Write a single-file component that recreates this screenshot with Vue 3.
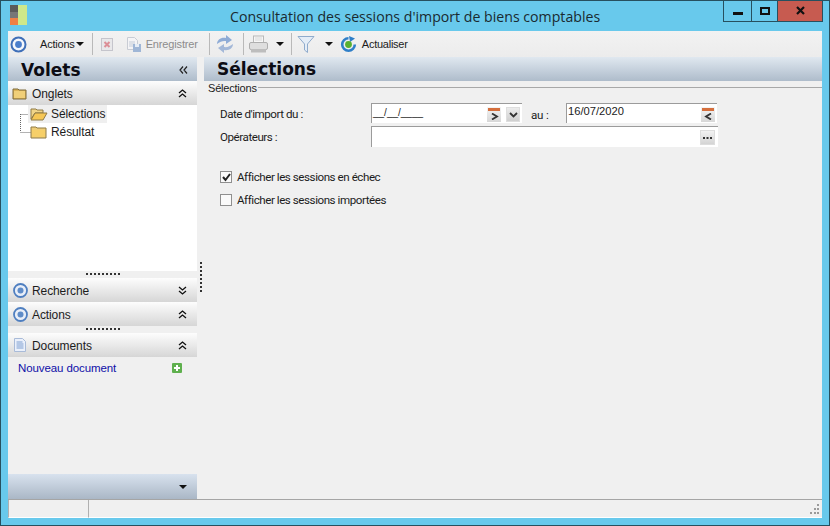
<script setup>
const folderBody = 'M1 3h5l1 1h7v9H1z'
</script>

<template>
  <div class="window">
    <header class="titlebar">
      <svg class="applogo" width="17" height="20" viewBox="0 0 17 20">
        <rect x="0" y="0" width="8" height="7" fill="#5b5b5b" />
        <rect x="0" y="7" width="8" height="6" fill="#777" />
        <rect x="0" y="13" width="8" height="7" fill="#ee8044" />
        <rect x="8" y="0" width="9" height="20" fill="#cfe88a" />
      </svg>
      <div class="title">Consultation des sessions d'import de biens comptables</div>
      <div class="winbtns">
        <div class="wb wb-min"><span></span></div>
        <div class="wb wb-max"><span></span></div>
        <div class="wb wb-close">
          <svg width="9" height="9" viewBox="0 0 9 9"><path d="M1 1l7 7M8 1L1 8" stroke="#111" stroke-width="2.2" fill="none" /></svg>
        </div>
      </div>
    </header>

    <div class="client">
      <div class="toolbar">
        <svg class="ti t-target" width="17" height="17" viewBox="0 0 17 17"><circle cx="8.500" cy="8.500" r="7" fill="#f4f7fc" stroke="#3f6fb8" stroke-width="2" /><circle cx="8.500" cy="8.500" r="3.400" fill="#4a7ecb" /></svg>
        <span class="tb-text t-actions">Actions</span><span class="caret c1"></span>
        <i class="sep s1"></i>
        <svg class="ti t-del" width="14" height="15" viewBox="0 0 14 15"><rect x="1.500" y="1.500" width="11" height="12" fill="#e8e8ea" stroke="#c5c5cc" /><path d="M4.500 5l5 5M9.500 5l-5 5" stroke="#dc8f97" stroke-width="2" /></svg>
        <svg class="ti t-save" width="18" height="17" viewBox="0 0 18 17"><path d="M2.500 1.500h7l3 3v9h-10z" fill="#f4f4f6" stroke="#c8ccd4" /><path d="M4 6h6M4 8h6M4 10h4" stroke="#c4ccd8" /><rect x="8" y="8" width="8" height="8" fill="#9fb6d6" /><rect x="10" y="8" width="4" height="3" fill="#e6edf6" /></svg>
        <span class="tb-text disabled">Enregistrer</span>
        <i class="sep s2"></i>
        <svg class="ti t-refresh" width="18" height="18" viewBox="0 0 18 18"><path d="M1 9c0-4 4-7 9-6V0l6 5-6 4V6C7 5.500 4 6.500 1 9z" fill="#8facd6" /><path d="M17 9c0 4-4 7-9 6v3l-6-5 6-4v3c3 .5 6-.5 9-3z" fill="#a3b8d8" /></svg>
        <i class="sep s3"></i>
        <svg class="ti t-print" width="19" height="18" viewBox="0 0 19 18"><rect x="4.500" y="1" width="10" height="7" fill="#f6f6f6" stroke="#b8b8b8" /><path d="M6 3h7M6 5h7" stroke="#d8d8d8" /><rect x=".5" y="7.500" width="18" height="7" rx="1.500" fill="#dedede" stroke="#aeaeae" /><rect x="2" y="14" width="15" height="3.500" fill="#bdbdbd" /></svg>
        <span class="caret c2"></span>
        <i class="sep s4"></i>
        <svg class="ti t-filter" width="18" height="19" viewBox="0 0 18 19"><path d="M1 1.500h16L10.500 9v8.500l-3-2.500V9z" fill="#e4edf7" stroke="#8fabcc" /></svg>
        <span class="caret c3"></span>
        <svg class="ti t-update" width="17" height="17" viewBox="0 0 17 17"><path d="M8.500 2.200a6.300 6.300 0 1 0 6.300 6.300" fill="none" stroke="#2f7fc8" stroke-width="2.600" /><path d="M9 0l6 2.500-5 3.500z" fill="#2f7fc8" /><circle cx="8.500" cy="8.500" r="3.400" fill="#58b030" /></svg>
        <span class="tb-text t-actualiser">Actualiser</span>
      </div>

      <div class="main">
        <aside class="side">
          <div class="side-head">
            <span>Volets</span>
            <svg width="9" height="8" viewBox="0 0 9 8"><path d="M4 .5L1 4l3 3.500M8 .5L5 4l3 3.500" fill="none" stroke="#222" stroke-width="1.200" /></svg>
          </div>
          <div class="band band-onglets">
            <svg class="band-ic" width="16" height="15" viewBox="0 0 16 15"><path :d="folderBody" fill="#dcb458" stroke="#7d6a3c" /><path d="M2 5h11v7H2z" fill="#f0cf78" /></svg>
            <span>Onglets</span>
            <svg class="chev" width="9" height="9" viewBox="0 0 9 9"><path d="M1 4l3.500-3L8 4M1 8l3.500-3L8 8" fill="none" stroke="#111" stroke-width="1.300" /></svg>
          </div>
          <div class="tree">
            <svg class="tree-lines" width="16" height="40" viewBox="0 0 16 40"><path d="M1.500 9V27M1.500 9.500H12M1.500 27.500H12" stroke="#666" stroke-dasharray="1 1" fill="none" /></svg>
            <div class="node selected">
              <svg width="18" height="14" viewBox="0 0 18 14"><path d="M1 2h5l1 1h6v3H5L1 12z" fill="#f0d488" stroke="#8f7a44" /><path d="M5 6h12l-4 7H1z" fill="#f6c755" stroke="#8f7a44" /></svg>
              <span>Sélections</span>
            </div>
            <div class="node">
              <svg width="18" height="14" viewBox="0 0 18 14"><path d="M1 2h5l1 1h9v10H1z" fill="#eecd78" stroke="#8f7a44" /><path d="M2 5h13v7H2z" fill="#f6cf68" /></svg>
              <span>Résultat</span>
            </div>
          </div>
          <div class="grip"></div>
          <div class="band">
            <svg class="band-ic" width="17" height="17" viewBox="0 0 17 17"><circle cx="8.500" cy="8.500" r="6.500" fill="#e8eef8" stroke="#4f7fc0" stroke-width="1.800" /><circle cx="8.500" cy="8.500" r="3" fill="#5f8cc8" /></svg>
            <span>Recherche</span>
            <svg class="chev" width="9" height="9" viewBox="0 0 9 9"><path d="M1 1l3.500 3L8 1M1 5l3.500 3L8 5" fill="none" stroke="#111" stroke-width="1.300" /></svg>
          </div>
          <div class="band">
            <svg class="band-ic" width="17" height="17" viewBox="0 0 17 17"><circle cx="8.500" cy="8.500" r="6.500" fill="#e8eef8" stroke="#4f7fc0" stroke-width="1.800" /><circle cx="8.500" cy="8.500" r="3" fill="#5f8cc8" /></svg>
            <span>Actions</span>
            <svg class="chev" width="9" height="9" viewBox="0 0 9 9"><path d="M1 4l3.500-3L8 4M1 8l3.500-3L8 8" fill="none" stroke="#111" stroke-width="1.300" /></svg>
          </div>
          <div class="grip"></div>
          <div class="band">
            <svg class="band-ic doc" width="14" height="16" viewBox="0 0 14 16"><path d="M1.500 1.500h8l3 3v10h-11z" fill="#eaf0fb" stroke="#a9bbd8" /><path d="M3.500 5h6M3.500 7h7M3.500 9h7M3.500 11h7" stroke="#7f9fd0" /></svg>
            <span>Documents</span>
            <svg class="chev" width="9" height="9" viewBox="0 0 9 9"><path d="M1 4l3.500-3L8 4M1 8l3.500-3L8 8" fill="none" stroke="#111" stroke-width="1.300" /></svg>
          </div>
          <div class="doc-row">
            <span class="newdoc">Nouveau document</span>
            <svg width="10" height="10" viewBox="0 0 10 10"><rect width="10" height="10" rx="1" fill="#5fb04e" /><path d="M5 2v6M2 5h6" stroke="#fff" stroke-width="2" /></svg>
          </div>
          <div class="side-fill"></div>
          <div class="side-foot"><span class="caret"></span></div>
        </aside>

        <div class="splitter"><div class="split-dots"></div></div>

        <section class="content">
          <div class="content-head">Sélections</div>
          <div class="legend-row">
            <span class="legend">Sélections</span>
            <i class="legend-line"></i>
          </div>
          <div class="form">
            <div class="frow r1">
              <label class="lbl">Date d'import du :</label>
              <div class="field f-from">
                <span class="mask">__/__/____</span>
                <span class="cal cal-a"><b></b><svg width="9" height="7" viewBox="0 0 9 7"><path d="M2 .5L7 3.500 2 6.500" fill="none" stroke="#333" stroke-width="1.800" /></svg></span>
                <span class="dd"><svg width="9" height="6" viewBox="0 0 9 6"><path d="M1 1l3.500 3.500L8 1" fill="none" stroke="#333" stroke-width="1.800" /></svg></span>
              </div>
              <span class="au">au :</span>
              <div class="field f-to">
                <span class="val">16/07/2020</span>
                <span class="cal"><b></b><svg width="9" height="7" viewBox="0 0 9 7"><path d="M7 .5L2 3.500 7 6.500" fill="none" stroke="#333" stroke-width="1.800" /></svg></span>
              </div>
            </div>
            <div class="frow r2">
              <label class="lbl">Opérateurs :</label>
              <div class="field f-op">
                <span class="dots"><svg width="9" height="3" viewBox="0 0 9 3" fill="#333"><rect width="2" height="2" y="1" /><rect x="3.500" width="2" height="2" y="1" /><rect x="7" width="2" height="2" y="1" /></svg></span>
              </div>
            </div>
            <div class="check c-first">
              <span class="box"><svg width="9" height="9" viewBox="0 0 9 9"><path d="M1 4l2.500 3L8 1" fill="none" stroke="#222" stroke-width="2" /></svg></span>
              <span>Afficher les sessions en échec</span>
            </div>
            <div class="check">
              <span class="box"></span>
              <span>Afficher les sessions importées</span>
            </div>
          </div>
        </section>
      </div>

      <footer class="status">
        <div class="st st1"></div>
        <div class="st st2">
          <svg class="resize" width="11" height="11" viewBox="0 0 11 11" fill="#9a9a9a"><rect x="8" y="0" width="2" height="2" /><rect x="5" y="4" width="2" height="2" /><rect x="8" y="4" width="2" height="2" /><rect x="1" y="8" width="2" height="2" /><rect x="5" y="8" width="2" height="2" /><rect x="8" y="8" width="2" height="2" /></svg>
        </div>
      </footer>
    </div>
  </div>
</template>

<style>
html, body { margin: 0; background: #68c9ec; }
</style>

<style scoped>
* { box-sizing: border-box; }
.window {
  width: 830px; height: 526px; background: #68c9ec; border: 1px solid #27505f;
  display: flex; flex-direction: column; overflow: hidden;
  font-family: "Liberation Sans", Arial, sans-serif; font-size: 11.5px; color: #1c1c1c;
}
.titlebar { height: 29px; flex: none; display: flex; position: relative; padding-left: 9px; }
.applogo { margin-top: 4px; }
.title {
  position: absolute; left: 229px; top: 6px; font-family: "Open Sans", sans-serif; font-size: 14.15px; color: #1a2a30; white-space: nowrap;
}
.winbtns { position: absolute; right: 6px; top: -1px; height: 22px; display: flex; border: 1px solid #27505f; border-top: 0; }
.wb { height: 21px; display: flex; align-items: center; justify-content: center; position: relative; }
.wb-min { width: 28px; border-right: 1px solid #27505f; }
.wb-max { width: 26px; border-right: 1px solid #27505f; }
.wb-close { width: 44px; background: #c75b50; }
.wb-min span { width: 10px; height: 3px; background: #111; margin-top: 5px; }
.wb-max span { width: 10px; height: 8px; border: 2px solid #111; }
.client { flex: 1; margin: 1px 7px 7px 7px; background: #f0f0f0; display: flex; flex-direction: column; min-height: 0; }
.toolbar {
  height: 26px; flex: none; display: flex; align-items: center; padding-left: 2px;
  background: linear-gradient(#f2f2f2, #ececec);
}
.ti { flex: none; }
.tb-text { white-space: nowrap; font-size: 11px; letter-spacing: -.2px; }
.disabled { color: #8c8c8c; margin-left: 3px; letter-spacing: -.15px; }
.t-actions { margin-left: 13px; }
.caret { display: inline-block; width: 0; height: 0; border-left: 4px solid transparent; border-right: 4px solid transparent; border-top: 4px solid #111; flex: none; }
.c1 { margin-left: 1px; }
.sep { width: 1px; height: 22px; background: #b9b9b9; flex: none; }
.s1 { margin-left: 8px; }
.t-del { margin-left: 7px; }
.t-save { margin-left: 11px; }
.s2 { margin-left: 11px; }
.t-refresh { margin-left: 6px; }
.s3 { margin-left: 9px; }
.t-print { margin-left: 5px; }
.c2 { margin-left: 8px; }
.s4 { margin-left: 7px; }
.t-filter { margin-left: 5px; }
.c3 { margin-left: 10px; }
.t-update { margin-left: 7px; }
.t-actualiser { margin-left: 5px; letter-spacing: -.25px; }

.main { flex: 1; display: flex; min-height: 0; }
.side { width: 189px; flex: none; display: flex; flex-direction: column; }
.side-head {
  height: 24px; flex: none; background: linear-gradient(#e0e8f0, #aebccb); display: flex; align-items: center; justify-content: space-between;
  padding: 1px 9px 0 13px; font-family: "DejaVu Sans", sans-serif; font-weight: 700; font-size: 17px; color: #0c0c14;
}
.band {
  height: 24px; flex: none; background: linear-gradient(#fdfdfd, #d6d6d6); display: flex; align-items: center; position: relative; font-size: 12px;
}
.band > span { position: absolute; left: 24px; top: 6px; letter-spacing: -.1px; }
.band-ic { position: absolute; left: 4px; top: 4px; }
.band-ic.doc { left: 5px; top: 4px; }
.band-onglets .band-ic { top: 5px; }
.chev { position: absolute; right: 10px; top: 8px; }
.tree { height: 166px; flex: none; background: #fff; position: relative; padding: 0 0 0 20px; }
.tree-lines { position: absolute; left: 11px; top: 0; }
.node { height: 18px; display: flex; align-items: center; gap: 3px; position: relative; z-index: 1; width: fit-content; padding: 0 2px 0 2px; font-size: 12px; letter-spacing: -.1px; }
.node.selected { background: #efefef; }
.grip { height: 7px; flex: none; position: relative; background: #f0f0f0; }
.grip::after {
  content: ""; position: absolute; left: 78px; top: 2px; width: 34px; height: 2px;
  background: repeating-linear-gradient(90deg, #333 0 2px, transparent 2px 4px);
}
.doc-row { height: 22px; flex: none; display: flex; align-items: center; justify-content: space-between; padding: 0 15px 1px 10px; }
.newdoc { color: #0f0fa8; font-size: 11.5px; letter-spacing: -.1px; }
.side-fill { flex: 1; }
.side-foot { height: 25px; flex: none; background: linear-gradient(#d8e2ee, #aab7c6); display: flex; align-items: center; justify-content: flex-end; padding: 1px 10px 0 0; }
.splitter { width: 7px; flex: none; position: relative; }
.split-dots { position: absolute; left: 3px; top: 205px; width: 2px; height: 32px; background: repeating-linear-gradient(#333 0 2px, transparent 2px 4px); }

.content { flex: 1; min-width: 0; display: flex; flex-direction: column; }
.content-head {
  height: 24px; flex: none; background: linear-gradient(#e0e8f0, #aebccb); padding: 1px 0 0 13px; font-family: "DejaVu Sans", sans-serif; font-weight: 700; font-size: 17px; line-height: 23px; color: #0c0c14;
}
.legend-row { height: 13px; flex: none; display: flex; align-items: center; padding-left: 4px; }
.legend { font-size: 11px; letter-spacing: -.2px; }
.legend-line { flex: 1; height: 1px; background: #a8a8a8; margin-left: 1px; }
.form { padding: 0 0 0 16px; font-family: Roboto, sans-serif; }
.frow { display: flex; position: relative; }
.r1 { height: 20px; margin-top: 9px; }
.r2 { height: 21px; margin-top: 3px; }
.lbl { width: 151px; padding-top: 4px; font-size: 11.6px; letter-spacing: -.45px; }
.field { background: #fff; border-top: 1px solid #9b9b9b; border-left: 1px solid #9b9b9b; height: 100%; position: relative; }
.f-from { width: 151px; }
.f-to { width: 151px; }
.f-op { width: 347px; }
.mask { position: absolute; left: 1px; top: 3px; font-size: 10px; font-family: "Liberation Sans", sans-serif; }
.val { position: absolute; left: 1px; top: 1px; font-size: 11.2px; font-family: "Liberation Sans", sans-serif; }
.cal { position: absolute; right: 2px; top: 3px; width: 14px; height: 15px; background: linear-gradient(#f4f4f4, #d7d7d7); display: flex; align-items: flex-end; justify-content: center; padding-bottom: 2px; }
.cal-a { right: 21px; }
.cal b { position: absolute; left: 1px; top: 1px; right: 1px; height: 3px; background: #d56f3d; }
.dd { position: absolute; right: 2px; top: 3px; width: 14px; height: 15px; background: linear-gradient(#ececec, #cfcfcf); border: 1px solid #dedede; display: flex; align-items: center; justify-content: center; }
.au { margin-left: 9px; margin-right: 17px; padding-top: 5px; font-size: 11.6px; width: 18px; white-space: nowrap; letter-spacing: -.2px; }
.dots { position: absolute; right: 3px; top: 3px; width: 15px; height: 15px; background: linear-gradient(#f2f2f2, #d4d4d4); border: 1px solid #ddd; display: flex; align-items: center; justify-content: center; }
.check { display: flex; align-items: center; gap: 5px; height: 14px; font-size: 11.6px; letter-spacing: -.45px; margin-bottom: 9px; }
.c-first { margin-top: 23px; }
.box { width: 12px; height: 12px; flex: none; border: 1px solid #8f8f8f; background: #fafafa; display: flex; align-items: center; justify-content: center; }
.status { height: 19px; flex: none; border-top: 1px solid #a5a5a5; display: flex; background: #f0f0f0; }
.st { border-left: 1px solid #b0b0b0; border-bottom: 1px solid #fff; position: relative; }
.st1 { width: 80px; }
.st2 { flex: 1; }
.resize { position: absolute; right: 2px; bottom: 2px; }
</style>
